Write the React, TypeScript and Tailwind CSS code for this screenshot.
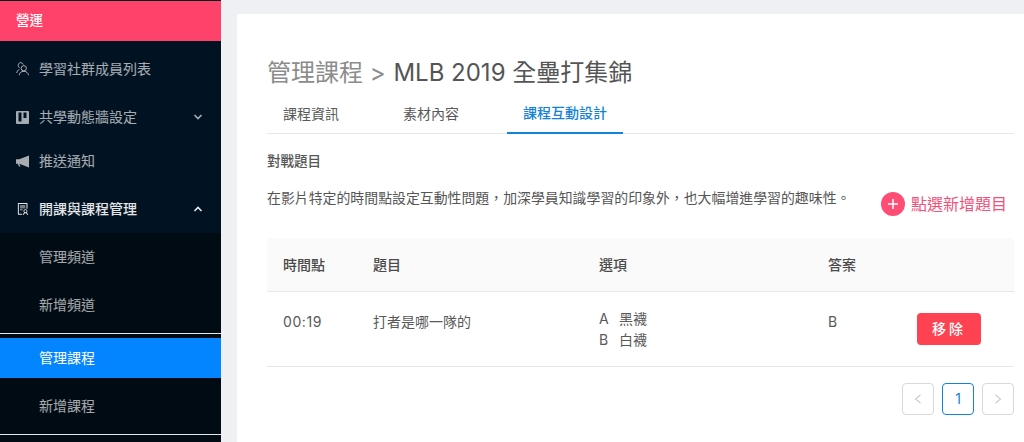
import { AiOutlineSolution, AiOutlineLeft, AiOutlineRight } from "react-icons/ai";

const font = "font-['Inter','Noto_Sans_CJK_TC',sans-serif]";

const PeopleIcon = () => (
  <svg width="14" height="14" viewBox="0 0 14 14" fill="none" stroke="currentColor" strokeWidth="1">
    <circle cx="7.8" cy="6.3" r="2.6" />
    <path d="M3.2 13.2c.3-2.500 2-3.900 4.600-3.900s4.300 1.400 4.700 3.900" />
    <path d="M7.300 2.600C6.800 1.300 5.800.7 4.700.7 3.200.7 2.200 1.900 2.200 3.400c0 1 .5 1.900 1.300 2.400M3.400 7.400C1.900 8 1 9.300.7 11" />
  </svg>
);

const BoardIcon = () => (
  <svg width="13" height="13" viewBox="0 0 13 13">
    <rect width="13" height="13" rx="1" fill="currentColor" />
    <rect x="2.500" y="1.500" width="3" height="9" fill="#011222" />
    <rect x="7.500" y="1.500" width="3" height="5.500" fill="#011222" />
  </svg>
);

const HornIcon = () => (
  <svg width="13" height="13" viewBox="0 0 13 13" fill="currentColor">
    <path d="M0 4.300h3.200L13 .5v12L3.200 8.800 4.500 11.500H3L1.600 8.800H0z" />
  </svg>
);

const Chevron = ({ up }: { up?: boolean }) => (
  <svg width="10" height="6" viewBox="0 0 10 6" fill="none" stroke="currentColor" strokeWidth="1.6" className="ml-auto mr-[18px]">
    <path d={up ? "M1.500 5L5 1.500 8.500 5" : "M1.500 1L5 4.500 8.500 1"} />
  </svg>
);

const App = () => {
  return (
    <div className={`flex h-[442px] w-[1024px] overflow-hidden bg-[#eef0f4] ${font}`}>
      {/* Sidebar */}
      <aside className="w-[221px] shrink-0 bg-[#011222] text-sm text-white/65">
        <div className="mt-px flex h-10 items-center bg-[#ff4269] pl-4 text-[13.5px] font-medium text-white">營運</div>
        <div className="mt-1 flex h-12 items-center gap-[9px] pl-4">
          <PeopleIcon />
          <span>學習社群成員列表</span>
        </div>
        <div className="flex h-12 items-center gap-2.5 pl-4">
          <BoardIcon />
          <span>共學動態牆設定</span>
          <Chevron />
        </div>
        <div className="flex h-10 items-center gap-2.5 pl-4">
          <HornIcon />
          <span>推送通知</span>
        </div>
        <div className="mt-1 flex h-12 items-center gap-[9px] pl-4 font-medium text-white/90">
          <AiOutlineSolution size={14} />
          <span>開課與課程管理</span>
          <Chevron up />
        </div>
        <div className="bg-[#000b14]">
          <div className="flex h-12 items-center pl-[39px]">管理頻道</div>
          <div className="flex h-12 items-center pl-[39px]">新增頻道</div>
          <div className="mt-1 h-[5px] border-t border-t-white/90"></div>
          <div className="flex h-10 items-center bg-[#0385ff] pl-[39px] text-white">管理課程</div>
          <div className="flex h-[57px] items-center border-b border-b-white/90 pl-[39px]">新增課程</div>
          <div className="h-2"></div>
        </div>
      </aside>

      {/* Main */}
      <div className="flex-1 pl-4 pt-3.5">
        <main className="h-full bg-white pl-[30px] pr-2.5">
          <h1 className="pt-[42px] text-2xl leading-[34px] text-[#555]">
            <span className="mr-px text-[#8c8c8c]">管理課程 &gt;</span> MLB 2019 全壘打集錦
          </h1>
          <div className="mt-[3px] flex h-[41px] gap-8 border-b border-b-[#e8e8e8] text-sm text-[#595959]">
            <div className="flex h-[41px] items-center px-4">課程資訊</div>
            <div className="flex h-[41px] items-center px-4">素材內容</div>
            <div className="flex h-[41px] items-center border-b-2 border-b-[#1283da] px-4 font-medium text-[#1283da]">課程互動設計</div>
          </div>
          <div className="mt-[17px] text-[13.5px] leading-5 font-medium text-[#555]">對戰題目</div>
          <div className="mt-[17px] flex items-start justify-between">
            <p className="text-[13.9px] leading-5 text-[#555]">在影片特定的時間點設定互動性問題，加深學員知識學習的印象外，也大幅增進學習的趣味性。</p>
            <div className="mr-[7px] flex items-center gap-[6px] pt-1 text-base text-[#f0527a]">
              <span className="flex h-6 w-6 items-center justify-center rounded-full bg-[#ff4d76]">
                <svg width="12" height="12" viewBox="0 0 12 12" stroke="white" strokeWidth="1.5"><path d="M6 1v10M1 6h10" /></svg>
              </span>
              點選新增題目
            </div>
          </div>

          {/* Table */}
          <div className="mt-[22px] border-b border-b-[#e8e8e8] text-sm text-[#595959]">
            <div className="flex h-[54px] items-center rounded-t border-b border-b-[#e8e8e8] bg-[#fafafa] font-medium text-[#4a4a4a]">
              <div className="w-[106px] pl-4">時間點</div>
              <div className="w-[226px]">題目</div>
              <div className="w-[229px]">選項</div>
              <div>答案</div>
            </div>
            <div className="flex h-[74px] items-start pt-5">
              <div className="w-[106px] pl-4 leading-5 tracking-[0.6px]">00:19</div>
              <div className="w-[226px] leading-5">打者是哪一隊的</div>
              <div className="-mt-1 w-[229px] leading-[21px]">
                <div className="flex"><span className="w-5">A</span>黑襪</div>
                <div className="flex"><span className="w-5">B</span>白襪</div>
              </div>
              <div className="w-[89px] leading-5">B</div>
              <button className="mt-px flex h-8 w-16 items-center justify-center rounded bg-[#ff4252] text-sm font-medium tracking-[3px] text-white">移除</button>
            </div>
          </div>

          {/* Pagination */}
          <div className="mt-[16px] flex justify-end gap-2">
            <div className="flex h-8 w-8 items-center justify-center rounded border border-[#d9d9d9] text-[#bfbfbf]"><AiOutlineLeft size={12} /></div>
            <div className="flex h-8 w-8 items-center justify-center rounded border border-[#1283da] text-sm text-[#1283da]">1</div>
            <div className="flex h-8 w-8 items-center justify-center rounded border border-[#d9d9d9] text-[#bfbfbf]"><AiOutlineRight size={12} /></div>
          </div>
        </main>
      </div>
    </div>
  );
};

export default App;
